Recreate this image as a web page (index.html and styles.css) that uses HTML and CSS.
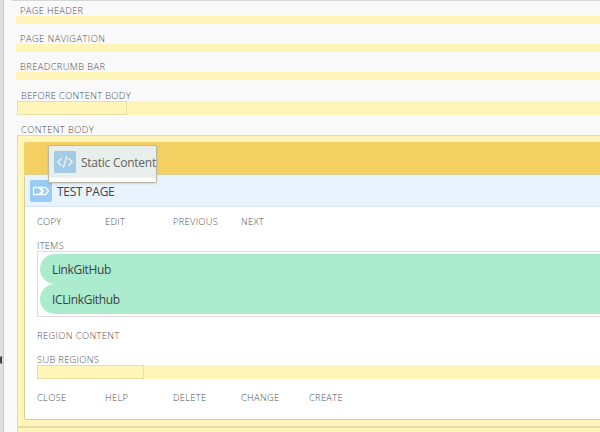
FILE: index.html
```
<!DOCTYPE html>
<html lang="en">
<head>
<meta charset="utf-8">
<title>Page Designer</title>
<link rel="stylesheet" href="styles.css">
</head>
<body>
<div class="app">
  <div class="splitter"><span class="handle"></span></div>
  <main class="canvas">
    <section class="slot"><h2 class="label">PAGE HEADER</h2><div class="bar"></div></section>
    <section class="slot"><h2 class="label nav">PAGE NAVIGATION</h2><div class="bar"></div></section>
    <section class="slot"><h2 class="label crumb">BREADCRUMB BAR</h2><div class="bar"></div></section>
    <section class="slot before"><h2 class="label">BEFORE CONTENT BODY</h2><div class="bar tall"><div class="cell"></div></div></section>
    <section class="content">
      <h2 class="label body-label">CONTENT BODY</h2>
      <div class="body">
        <div class="drop"></div>
        <article class="region">
          <header class="region-head">
            <svg class="icon" viewBox="0 0 22 22"><rect width="22" height="22" rx="2" fill="#99cbf4"/><path d="M3.5 7.5h5.5l3.2 3.5-3.2 3.5H3.5zM10.5 7.5h5l3 3.5-3 3.5h-5l2.7-3.5z" fill="none" stroke="#fff" stroke-width="1.3"/></svg>
            <span class="title">TEST PAGE</span>
          </header>
          <div class="row top"><span>COPY</span><span>EDIT</span><span>PREVIOUS</span><span>NEXT</span></div>
          <h3 class="label sub items-label">ITEMS</h3>
          <div class="items"><div class="item">LinkGitHub</div><div class="item">ICLinkGithub</div></div>
          <h3 class="label sub content-label">REGION CONTENT</h3>
          <h3 class="label sub regions-label">SUB REGIONS</h3>
          <div class="bar tall inner"><div class="cell"></div></div>
          <div class="row bottom"><span>CLOSE</span><span>HELP</span><span>DELETE</span><span>CHANGE</span><span>CREATE</span></div>
        </article>
      </div>
      <div class="next"></div>
    </section>
  </main>
  <div class="drag">
    <svg class="icon" viewBox="0 0 22 22"><rect width="22" height="22" rx="1.5" fill="#a2cbe5"/><path d="M7.8 7L3.8 11l4 4M14.2 7l4 4-4 4M12.8 5.2L9.2 16.8" fill="none" stroke="#e8f0f2" stroke-width="1.5"/></svg>
    <span>Static Content</span>
  </div>
</div>
</body>
</html>
```

FILE: styles.css
```
* { box-sizing: border-box; }
body { margin: 0; background: #f9f9f9; font-family: "Open Sans", "Noto Sans", sans-serif; }
.app { position: relative; display: flex; width: 600px; height: 432px; overflow: hidden; }
.splitter { flex: none; display: flex; width: 4px; background: #e0e0e0; border-right: 1px solid #c8c8c8; }
.handle { width: 2px; height: 8px; margin-top: 356px; background: #404040; border-radius: 4px 0 0 4px; }
.canvas { flex: 1; min-width: 0; display: flex; flex-direction: column; padding-left: 12px; }
.canvas::before { content: ""; flex: none; height: 1px; margin-left: -4px; background: #d6d6d6; }
.slot { flex: none; height: 28px; padding-top: 4px; }
.label { margin: 0; height: 11px; padding-left: 4px; font-size: 9.3px; font-weight: 300; line-height: 12px; color: #505050; white-space: nowrap; letter-spacing: .32px; }
.nav { letter-spacing: .45px; }
.crumb { letter-spacing: .4px; }
.bar { height: 8px; background: #fff5b8; }
.before { height: 34px; padding: 5px 0 0 1px; }
.tall { height: 14px; }
.cell { width: 110px; height: 14px; border: 1px solid #e8dfa4; }
.content { flex: none; padding-left: 1px; }
.body-label { margin-top: 5px; letter-spacing: .42px; }
.body { width: 640px; height: 292px; padding: 6px; background: #fff5b8; border: 1px solid #e5dca8; }
.drop { height: 32px; background: #f4cf62; border-radius: 2px 2px 0 0; }
.region { height: 246px; background: #fff; border: 1px solid #d8cf98; border-radius: 0 0 2px 2px; }
.region-head { display: flex; align-items: center; height: 32px; padding-left: 5px; background: #e8f3fe; border-bottom: 1px solid #dbe6f1; }
.icon { display: block; flex: none; width: 22px; height: 22px; }
.title { margin: 2px 0 0 5px; font-size: 12px; letter-spacing: -.25px; color: #444; line-height: 20px; }
.row { display: flex; margin-left: 12px; height: 12px; font-size: 9.3px; font-weight: 300; line-height: 12px; letter-spacing: .3px; color: #505050; }
.row span { width: 68px; }
.top { margin-top: 9px; }
.sub { margin: 12px 0 0 12px; padding: 0; }
.content-label { margin-top: 13px; height: 12px; letter-spacing: .4px; }
.items { height: 66px; margin-left: 12px; padding: 2px; border: 1px solid #ddd; }
.item { height: 30px; padding-left: 12px; border-radius: 15px; background: #abebce; font-size: 12px; line-height: 31px; letter-spacing: -.35px; color: #404040; }
.inner { margin-left: 12px; }
.inner .cell { width: 107px; }
.bottom { margin-top: 13px; }
.next { width: 640px; height: 20px; border: 1px solid #e5dca8; background: #fff5b8; }
.drag { position: absolute; left: 48px; top: 145px; display: flex; width: 109px; height: 38px; padding: 5px 0 0 5px; border: 1px solid #b9b9a5; border-radius: 2px; background: linear-gradient(#e8eeeb 0 31px, #e8f3fe 31px 32px, #fff 32px); box-shadow: 0 1px 2px #0002; font-size: 12px; line-height: 23px; letter-spacing: -.25px; color: #606562; white-space: nowrap; }
.drag span { margin-left: 5px; }
```
